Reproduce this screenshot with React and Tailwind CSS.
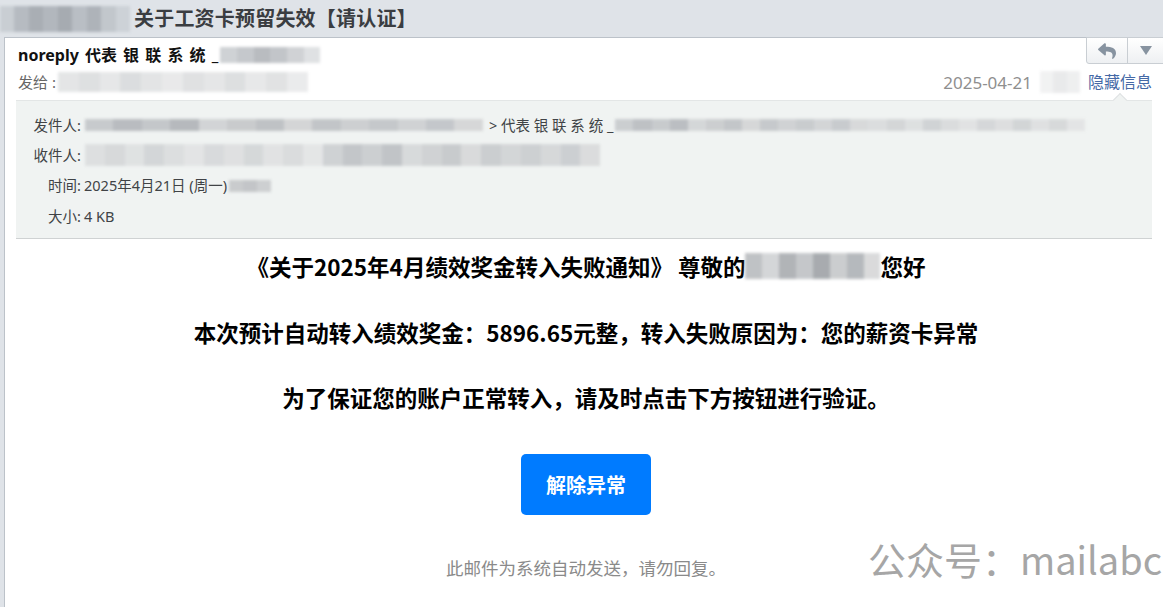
import React from "react";
import { FaReply } from "react-icons/fa";

const FONT = { fontFamily: '"Noto Sans", "Noto Sans CJK SC", sans-serif' };

function Blur({ w, h, shades, className = "" }) {
  return (
    <span
      className={"inline-flex overflow-visible blur-[1.5px] align-middle " + className}
      style={{ width: w, height: h }}
    >
      {shades.map((c, i) => (
        <span key={i} className="flex-1 h-full" style={{ background: c }} />
      ))}
    </span>
  );
}

const g1 = ["#c7cacd", "#b9bcc0", "#c4c7ca", "#b6b9bd", "#d2d4d6", "#c9cbcd", "#bfc2c5", "#d4d5d6", "#c2c5c8", "#cdcfd1", "#c5c8cb", "#d0d2d4", "#c4c7cb", "#d6d7d8"];
const g2 = ["#d9dbdc", "#d1d3d5", "#dcdedf", "#cdd0d2", "#d8dadb", "#e0e1e2", "#d3d5d7", "#dbdcdd", "#cfd2d4", "#dedfe0", "#d5d7d8", "#e2e3e4"];

export default function App() {
  return (
    <div className="relative w-[1163px] h-[607px] overflow-hidden bg-[#dfe3e8]" style={FONT}>
      {/* top title bar */}
      <div className="h-[37px] flex items-center">
        <Blur w={130} h={26} shades={["#c9ced3", "#b6bbc1", "#a9aeb4", "#b2b7bd", "#a6abb1", "#b9bec4", "#aeb3b9", "#c2c7cc", "#cdd2d7"]} />
        <span className="ml-[4px] text-[20px] font-bold text-[#3a3d41] leading-none tracking-[0.2px]">
          关于工资卡预留失效【请认证】
        </span>
      </div>

      {/* main panel */}
      <div className="relative ml-[4px] h-[570px] bg-white border-l border-t border-[#bcc2c9]">
        {/* reply buttons */}
        <div className="absolute left-[1081px] top-[-1px] w-[90px] h-[27px] flex border border-[#c9ced3] rounded-bl-[3px] bg-gradient-to-b from-[#ffffff] to-[#eef0f2]">
          <div className="w-[41px] flex items-center justify-center border-r border-[#c9ced3]">
            <FaReply className="text-[#8793a0] w-[18px] h-[18px]" />
          </div>
          <div className="w-[35px] flex items-center justify-center">
            <svg width="12" height="9" viewBox="0 0 12 9">
              <path d="M0 0 H12 L6 9 Z" fill="#8793a0" />
            </svg>
          </div>
        </div>

        {/* header row 1 */}
        <div className="pl-[13px] pt-[8px] h-[26px] flex items-center">
          <span className="text-[16px] font-bold text-[#111] leading-none [word-spacing:2px]">
            noreply 代表 银 联 系 统 _
          </span>
          <Blur w={100} h={16} className="ml-[2px]" shades={["#cfd2d5", "#c5c8cc", "#b9bcc0", "#c2c5c9", "#d0d2d5", "#dfe1e3"]} />
        </div>

        {/* header row 2 */}
        <div className="pl-[13px] pr-[11px] mt-[5px] h-[26px] flex items-center">
          <span className="text-[15px] text-[#666] leading-none">发给 :</span>
          <Blur w={250} h={20} className="ml-[2px] opacity-70" shades={g2} />
          <span className="ml-auto text-[17px] text-[#8f8f8f] leading-none">2025-04-21</span>
          <Blur w={40} h={22} className="ml-[8px] opacity-60" shades={["#e9eaeb", "#dcdddf", "#e4e5e6"]} />
          <span className="ml-[8px] text-[16px] text-[#4569a6] leading-none">隐藏信息</span>
        </div>

        {/* details box */}
        <div className="relative mt-[5px] ml-[11px] w-[1136px] h-[139px] bg-[#f0f3f2] border-t border-[#e3e6e6] border-b border-b-[#cfd2d3] text-[14.5px] text-[#404346]">
          <div className="absolute right-[27px] top-[-6px] w-[10px] h-[10px] rotate-45 bg-[#f0f3f2] border-l border-t border-[#dfe2e3]" />
          <div className="flex flex-col pt-[9px]">
            <div className="h-[30px] flex items-center">
              <span className="w-[65px] text-right leading-none">发件人:</span>
              <Blur w={398} h={12} className="ml-[4px]" shades={g1} />
              <span className="ml-[6px] leading-none">&gt; 代表 银 联 系 统 _</span>
              <Blur w={470} h={12} className="ml-[2px] opacity-90" shades={[...g1, ...g2]} />
            </div>
            <div className="h-[30px] flex items-center">
              <span className="w-[65px] text-right leading-none">收件人:</span>
              <Blur w={515} h={22} className="ml-[4px] opacity-80" shades={[...g2, ...g1]} />
            </div>
            <div className="h-[31px] flex items-center">
              <span className="w-[65px] text-right leading-none">时间:</span>
              <span className="ml-[3px] leading-none">2025年4月21日 (周一)</span>
              <Blur w={42} h={12} className="ml-[2px]" shades={["#c9cbcd", "#c3c5c8", "#cdcfd1"]} />
            </div>
            <div className="h-[30px] flex items-center">
              <span className="w-[65px] text-right leading-none">大小:</span>
              <span className="ml-[3px] leading-none">4 KB</span>
            </div>
          </div>
        </div>

        {/* body */}
        <div className="flex flex-col items-center pl-[4px] font-bold text-[22.5px] text-black" style={{ fontFamily: '"Noto Sans CJK SC", "Noto Sans", sans-serif' }}>
          <p className="mt-[12px] h-[30px] leading-[30px] flex items-center">
            <span>《关于2025年4月绩效奖金转入失败通知》 尊敬的</span>
            <Blur w={135} h={26} className="opacity-90" shades={["#b9bcbf", "#d0d2d4", "#a9acb0", "#bfc2c5", "#9fa3a7", "#c6c8ca", "#aeb2b6", "#d6d7d8"]} />
            <span>您好</span>
          </p>
          <p className="mt-[36px] h-[30px] leading-[30px]">本次预计自动转入绩效奖金：5896.65元整，转入失败原因为：您的薪资卡异常</p>
          <p className="mt-[35px] h-[30px] leading-[30px]">为了保证您的账户正常转入，请及时点击下方按钮进行验证。</p>
          <div className="mt-[42px] w-[130px] h-[61px] rounded-[5px] bg-[#007bff] flex items-center justify-center text-white text-[20px] leading-none">
            解除异常
          </div>
          <p className="mt-[41px] h-[24px] leading-[24px] text-[17.5px] font-normal text-[#8a8a8a]">
            此邮件为系统自动发送，请勿回复。
          </p>
        </div>
      </div>

      {/* watermark */}
      <div className="absolute left-[868px] top-[536px] text-[38px] leading-[46px] text-[#a6a6a6] whitespace-nowrap" style={{ fontFamily: '"Noto Sans CJK SC", "Noto Sans", sans-serif' }}>
        公众号：mailabc
      </div>
    </div>
  );
}
